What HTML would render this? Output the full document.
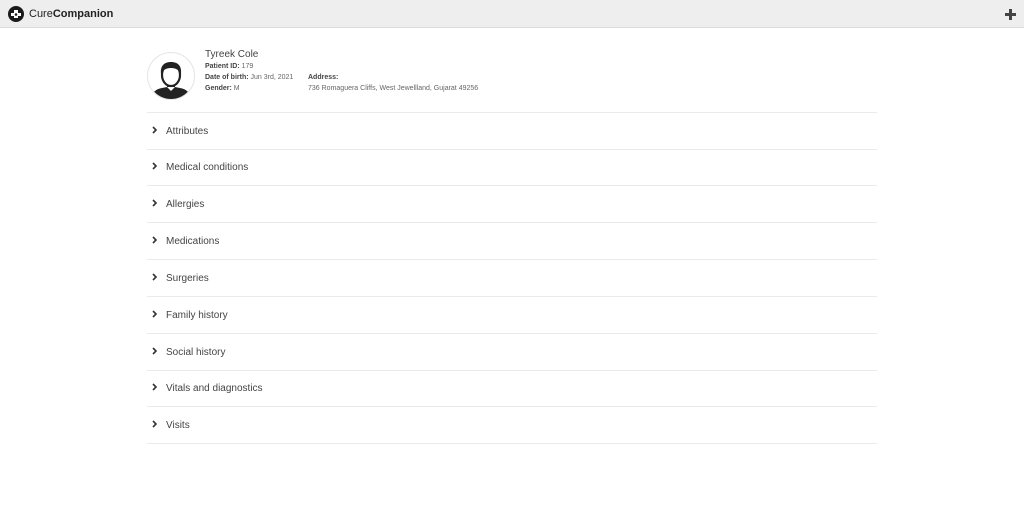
<!DOCTYPE html>
<html><head><meta charset="utf-8"><style>
*{margin:0;padding:0;box-sizing:border-box}
body{width:1024px;height:530px;background:#fff;font-family:"Liberation Sans",Arial,sans-serif;color:#333;position:relative;overflow:hidden}
.hdr{position:absolute;left:0;top:0;width:1024px;height:28px;background:#eeeeee;border-bottom:1px solid #ddd}
.logo{position:absolute;left:8px;top:6px}
.brand{position:absolute;left:29px;top:8px;font-size:11px;color:#222}
.plus{position:absolute;left:1005px;top:9px}
.av{position:absolute;left:147px;top:52px;width:48px;height:48px;border-radius:50%;border:1px solid #e4e4e4;overflow:hidden}
.name{position:absolute;left:205px;top:49px;font-size:10px;color:#444}
.sm{position:absolute;font-size:7px;color:#666;white-space:nowrap}
.sm b{color:#444;font-weight:bold}
.row{position:absolute;left:147px;width:730px;border-top:1px solid #eaeaea}
.lbl{position:absolute;left:166px;font-size:10px;color:#444}
.chev{position:absolute;left:152px}
</style></head><body>
<div class="hdr">
<svg class="logo" width="16" height="16" viewBox="0 0 16 16"><circle cx="8" cy="8" r="8" fill="#1a1a1a"/><path d="M3 7h3V4h4v3h3v3H10v2H6v-2H3z" fill="#fff"/><circle cx="8" cy="8.5" r="1.3" fill="#1a1a1a"/></svg>
<div class="brand">Cure<b>Companion</b></div>
<svg class="plus" width="11" height="11" viewBox="0 0 11 11"><path d="M4 0h3v4h4v3H7v4H4V7H0V4h4z" fill="#444"/></svg>
</div>
<div class="av"><svg width="46" height="46" viewBox="0 0 46 46"><path d="M3 46c1-7 5-10 11-11l5-1v-3h8v3l5 1c6 1 10 4 11 11z" fill="#222"/><path d="M19 34l4 4 4-4z" fill="#fff"/><ellipse cx="23" cy="22" rx="9" ry="11" fill="#fff" stroke="#222" stroke-width="2.2"/><path d="M13 21c-1-9 4-12 10-12s11 3 10 12c-2-4-5-6-10-6s-8 2-10 6z" fill="#222"/></svg></div>
<div class="name">Tyreek Cole</div>
<div class="sm" style="left:205px;top:63px"><b>Patient ID:</b> 179</div>
<div class="sm" style="left:205px;top:74px"><b>Date of birth:</b> Jun 3rd, 2021</div>
<div class="sm" style="left:205px;top:85px"><b>Gender:</b> M</div>
<div class="sm" style="left:308px;top:74px"><b>Address:</b></div>
<div class="sm" style="left:308px;top:85px">736 Romaguera Cliffs, West Jewellland, Gujarat 49256</div>

<div class="row" style="top:112px"></div>
<div class="row" style="top:149px"></div>
<div class="row" style="top:185px"></div>
<div class="row" style="top:222px"></div>
<div class="row" style="top:259px"></div>
<div class="row" style="top:296px"></div>
<div class="row" style="top:333px"></div>
<div class="row" style="top:370px"></div>
<div class="row" style="top:406px"></div>
<div class="row" style="top:443px"></div>

<svg class="chev" style="top:126px" width="6" height="8" viewBox="0 0 6 8"><path d="M1 1l3 3-3 3" stroke="#333" stroke-width="1.6" fill="none"/></svg><div class="lbl" style="top:126px">Attributes</div>
<svg class="chev" style="top:162px" width="6" height="8" viewBox="0 0 6 8"><path d="M1 1l3 3-3 3" stroke="#333" stroke-width="1.6" fill="none"/></svg><div class="lbl" style="top:162px">Medical conditions</div>
<svg class="chev" style="top:199px" width="6" height="8" viewBox="0 0 6 8"><path d="M1 1l3 3-3 3" stroke="#333" stroke-width="1.6" fill="none"/></svg><div class="lbl" style="top:199px">Allergies</div>
<svg class="chev" style="top:236px" width="6" height="8" viewBox="0 0 6 8"><path d="M1 1l3 3-3 3" stroke="#333" stroke-width="1.6" fill="none"/></svg><div class="lbl" style="top:236px">Medications</div>
<svg class="chev" style="top:273px" width="6" height="8" viewBox="0 0 6 8"><path d="M1 1l3 3-3 3" stroke="#333" stroke-width="1.6" fill="none"/></svg><div class="lbl" style="top:273px">Surgeries</div>
<svg class="chev" style="top:310px" width="6" height="8" viewBox="0 0 6 8"><path d="M1 1l3 3-3 3" stroke="#333" stroke-width="1.6" fill="none"/></svg><div class="lbl" style="top:310px">Family history</div>
<svg class="chev" style="top:347px" width="6" height="8" viewBox="0 0 6 8"><path d="M1 1l3 3-3 3" stroke="#333" stroke-width="1.6" fill="none"/></svg><div class="lbl" style="top:347px">Social history</div>
<svg class="chev" style="top:383px" width="6" height="8" viewBox="0 0 6 8"><path d="M1 1l3 3-3 3" stroke="#333" stroke-width="1.6" fill="none"/></svg><div class="lbl" style="top:383px">Vitals and diagnostics</div>
<svg class="chev" style="top:420px" width="6" height="8" viewBox="0 0 6 8"><path d="M1 1l3 3-3 3" stroke="#333" stroke-width="1.6" fill="none"/></svg><div class="lbl" style="top:420px">Visits</div>
</body></html>
